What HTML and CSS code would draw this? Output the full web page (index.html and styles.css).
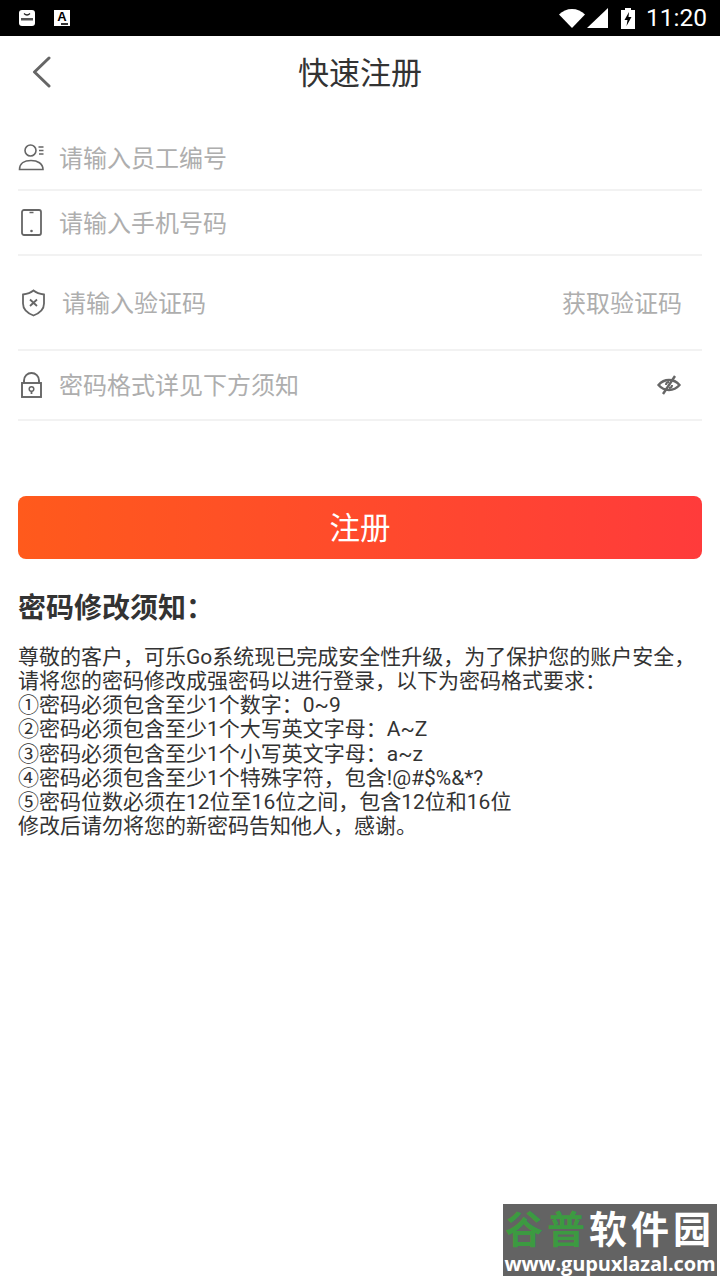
FILE: index.html
```html
<!DOCTYPE html>
<html lang="zh-CN">
<head>
    <meta charset="UTF-8">
    <meta name="viewport" content="width=device-width, initial-scale=1.0">
    <title>快速注册</title>
    <link rel="stylesheet" href="styles.css">
</head>
<body>

    <div class="status-bar">
        <div class="status-left">
            <span class="app-icon app-wave"><svg width="16" height="16" viewBox="0 0 16 16"><path d="M5 3.500q3 3 6 0" fill="none" stroke="#222" stroke-width="1.200"/><rect x="2" y="8" width="12" height="2.500" fill="#555"/></svg></span>
            <span class="app-icon app-a">A<i class="app-dots"></i></span>
        </div>
        <div class="status-right">
            <svg width="26" height="20" viewBox="0 0 26 20"><path d="M0 6.500C3.500 3 8 1 13 1s9.500 2 13 5.500L13 20z" fill="#fff"/></svg>
            <svg class="signal" width="21" height="20" viewBox="0 0 21 20"><path d="M0 20 21 0v20z" fill="#fff"/></svg>
            <svg class="battery" width="14" height="21" viewBox="0 0 14 21"><path d="M4 0h6v2h4v19H0V2h4z" fill="#fff"/><path d="M8 4 3.500 12H6.500L5.500 18 10.500 9H7.500z" fill="#000"/></svg>
            <span class="clock">11:20</span>
        </div>
    </div>

    <div class="header">
        <svg class="back" width="22" height="32" viewBox="0 0 22 32"><path d="M18 2 3.500 16 18 30" fill="none" stroke="#666" stroke-width="3" stroke-linecap="round" stroke-linejoin="round"/></svg>
        <h1>快速注册</h1>
    </div>

    <div class="form">
        <div class="row row-id">
            <svg class="icon" width="28" height="28" viewBox="0 0 28 28" fill="none" stroke="#666" stroke-width="1.600"><circle cx="12.500" cy="7.500" r="5.500"/><path d="M1.500 26.500c0-6 5-9 11.500-9s12 3 12 9z"/><path d="M20.500 4h5M21 7.500h4.500M21 11h4.500" stroke-width="1.300"/></svg>
            <span class="hint hint-id">请输入员工编号</span>
        </div>
        <div class="row row-phone">
            <svg class="icon" width="28" height="28" viewBox="0 0 28 28" fill="none" stroke="#666" stroke-width="1.800"><rect x="4" y="1" width="19" height="25" rx="2"/><path d="M11.500 3.500h4" stroke-width="1.500"/><circle cx="13.500" cy="22" r="1.300" fill="#666" stroke="none"/></svg>
            <span class="hint hint-id">请输入手机号码</span>
        </div>
        <div class="row row-code">
            <svg class="icon icon-shield" width="28" height="28" viewBox="0 0 28 28" fill="none" stroke="#666" stroke-width="1.800"><path d="M13.500 1.500c3 2.500 6.500 3.500 10.500 4v9c0 5.500-4 9.500-10.500 12C7 24 3 20 3 14.500v-9c4-.5 7.500-1.500 10.500-4z"/><path d="M10 10.500l7 6.500M17 10.500l-7 6.500"/></svg>
            <span class="hint hint-code">请输入验证码</span>
            <span class="hint get-code">获取验证码</span>
        </div>
        <div class="row row-pwd">
            <svg class="icon" width="28" height="28" viewBox="0 0 28 28" fill="none" stroke="#666" stroke-width="1.900"><path d="M6 12V9.500a7.500 7.500 0 0 1 15 0V12"/><rect x="4" y="12" width="19" height="14"/><circle cx="13.500" cy="18" r="2.300" stroke-width="1.500"/><path d="M13.500 20v3" stroke-width="1.800"/></svg>
            <span class="hint hint-pwd">密码格式详见下方须知</span>
            <svg class="eye" width="24" height="20" viewBox="0 0 24 20" fill="none" stroke="#666" stroke-width="2.400"><path d="M1.500 10c3-3.500 6-5 10.500-5s7.500 1.500 10.500 5c-3 3.500-6 5-10.500 5s-7.500-1.500-10.500-5z"/><path d="M9 10a3 3 0 0 1 3-3M15 10a3 3 0 0 1-3 3" stroke-width="2"/><path d="M18 1 6 19" stroke-width="2.400"/></svg>
        </div>
    </div>

    <button class="submit">注册</button>

    <div class="notice">
        <h2>密码修改须知：</h2>
        <p>尊敬的客户，可乐Go系统现已完成安全性升级，为了保护您的账户安全，<br>
        请将您的密码修改成强密码以进行登录，以下为密码格式要求：<br>
        ①密码必须包含至少1个数字：0~9<br>
        ②密码必须包含至少1个大写英文字母：A~Z<br>
        ③密码必须包含至少1个小写英文字母：a~z<br>
        ④密码必须包含至少1个特殊字符，包含!@#$%&amp;*?<br>
        ⑤密码位数必须在12位至16位之间，包含12位和16位<br>
        修改后请勿将您的新密码告知他人，感谢。</p>
    </div>

    <div class="watermark">
        <div class="wm-title"><span class="wm-green">谷普</span>软件园</div>
        <div class="wm-url">www.gupuxlazal.com</div>
    </div>

</body>
</html>
```

FILE: styles.css
```css
html, body {
    margin: 0;
    padding: 0;
}
body {
    position: relative;
    width: 720px;
    height: 1280px;
    overflow: hidden;
    background: #fff;
    font-family: Roboto, "Noto Sans CJK SC", sans-serif;
}

.status-bar {
    display: flex;
    justify-content: space-between;
    align-items: center;
    height: 36px;
    background: #000;
    padding: 0 13px 0 19px;
}
.status-left {
    display: flex;
    gap: 19px;
}
.app-icon {
    display: block;
    position: relative;
    width: 16px;
    height: 16px;
    background: #fff;
}
.app-wave {
    border-radius: 3px;
}
.app-a {
    font-family: "Liberation Sans", sans-serif;
    font-size: 13px;
    font-weight: bold;
    line-height: 13px;
    text-align: center;
    color: #000;
}
.app-dots {
    position: absolute;
    right: 2px;
    bottom: 1px;
    width: 7px;
    height: 2px;
    background: #333;
}
.status-right {
    display: flex;
    align-items: center;
}
.signal {
    margin-left: 2px;
}
.battery {
    margin-left: 13px;
}
.clock {
    margin-left: 11px;
    font-family: Roboto, sans-serif;
    font-size: 24.500px;
    color: #fff;
    line-height: 36px;
}

.header {
    position: relative;
    display: flex;
    justify-content: center;
    align-items: center;
    height: 72px;
}
.header h1 {
    margin: 0;
    padding-bottom: 4px;
    font-size: 31px;
    font-weight: 400;
    color: #333;
}
.back {
    position: absolute;
    left: 31px;
    top: 20px;
}

.form {
    margin: 0 18px;
}
.row {
    display: flex;
    align-items: center;
    border-bottom: 2px solid #f2f2f2;
    box-sizing: border-box;
}
.row-id {
    height: 83px;
    padding-top: 17px;
}
.row-phone {
    height: 65px;
}
.row-code {
    height: 95px;
}
.row-pwd {
    height: 70px;
}
.icon {
    flex: none;
}
.hint {
    padding-bottom: 2px;
    font-size: 24px;
    color: #aeaeae;
}
.hint-id {
    margin-left: 13px;
}
.icon-shield {
    margin-left: 2px;
}
.hint-code {
    margin-left: 14px;
}
.get-code {
    margin-left: auto;
    margin-right: 20px;
}
.hint-pwd {
    margin-left: 13px;
    padding-bottom: 4px;
}
.eye {
    margin-left: auto;
    margin-right: 21px;
}

.submit {
    display: block;
    width: 684px;
    height: 63px;
    margin: 75px 18px 0;
    padding: 0 0 4px;
    border: none;
    border-radius: 8px;
    background: linear-gradient(90deg, #ff5a1c, #ff3b3b);
    color: #fff;
    font-family: inherit;
    font-size: 30.500px;
}

.notice {
    margin: 29px 18px 0;
}
.notice h2 {
    margin: 0;
    font-size: 28px;
    line-height: 42px;
    font-weight: 700;
    color: #333;
}
.notice p {
    margin: 15px 0 0;
    font-size: 21px;
    line-height: 24.150px;
    color: #333;
    white-space: nowrap;
}

.watermark {
    position: absolute;
    left: 503px;
    top: 1204px;
    width: 214px;
    height: 72px;
    padding-top: 4px;
    box-sizing: border-box;
    background: #636363;
    color: #fff;
    text-align: center;
    font-weight: 700;
}
.wm-title {
    font-size: 38px;
    line-height: 44px;
    white-space: nowrap;
    letter-spacing: 4px;
}
.wm-green {
    color: #3c9a41;
}
.wm-url {
    font-family: "Open Sans", sans-serif;
    font-size: 20px;
    line-height: 24px;
    letter-spacing: -.1px;
    white-space: nowrap;
}
```
